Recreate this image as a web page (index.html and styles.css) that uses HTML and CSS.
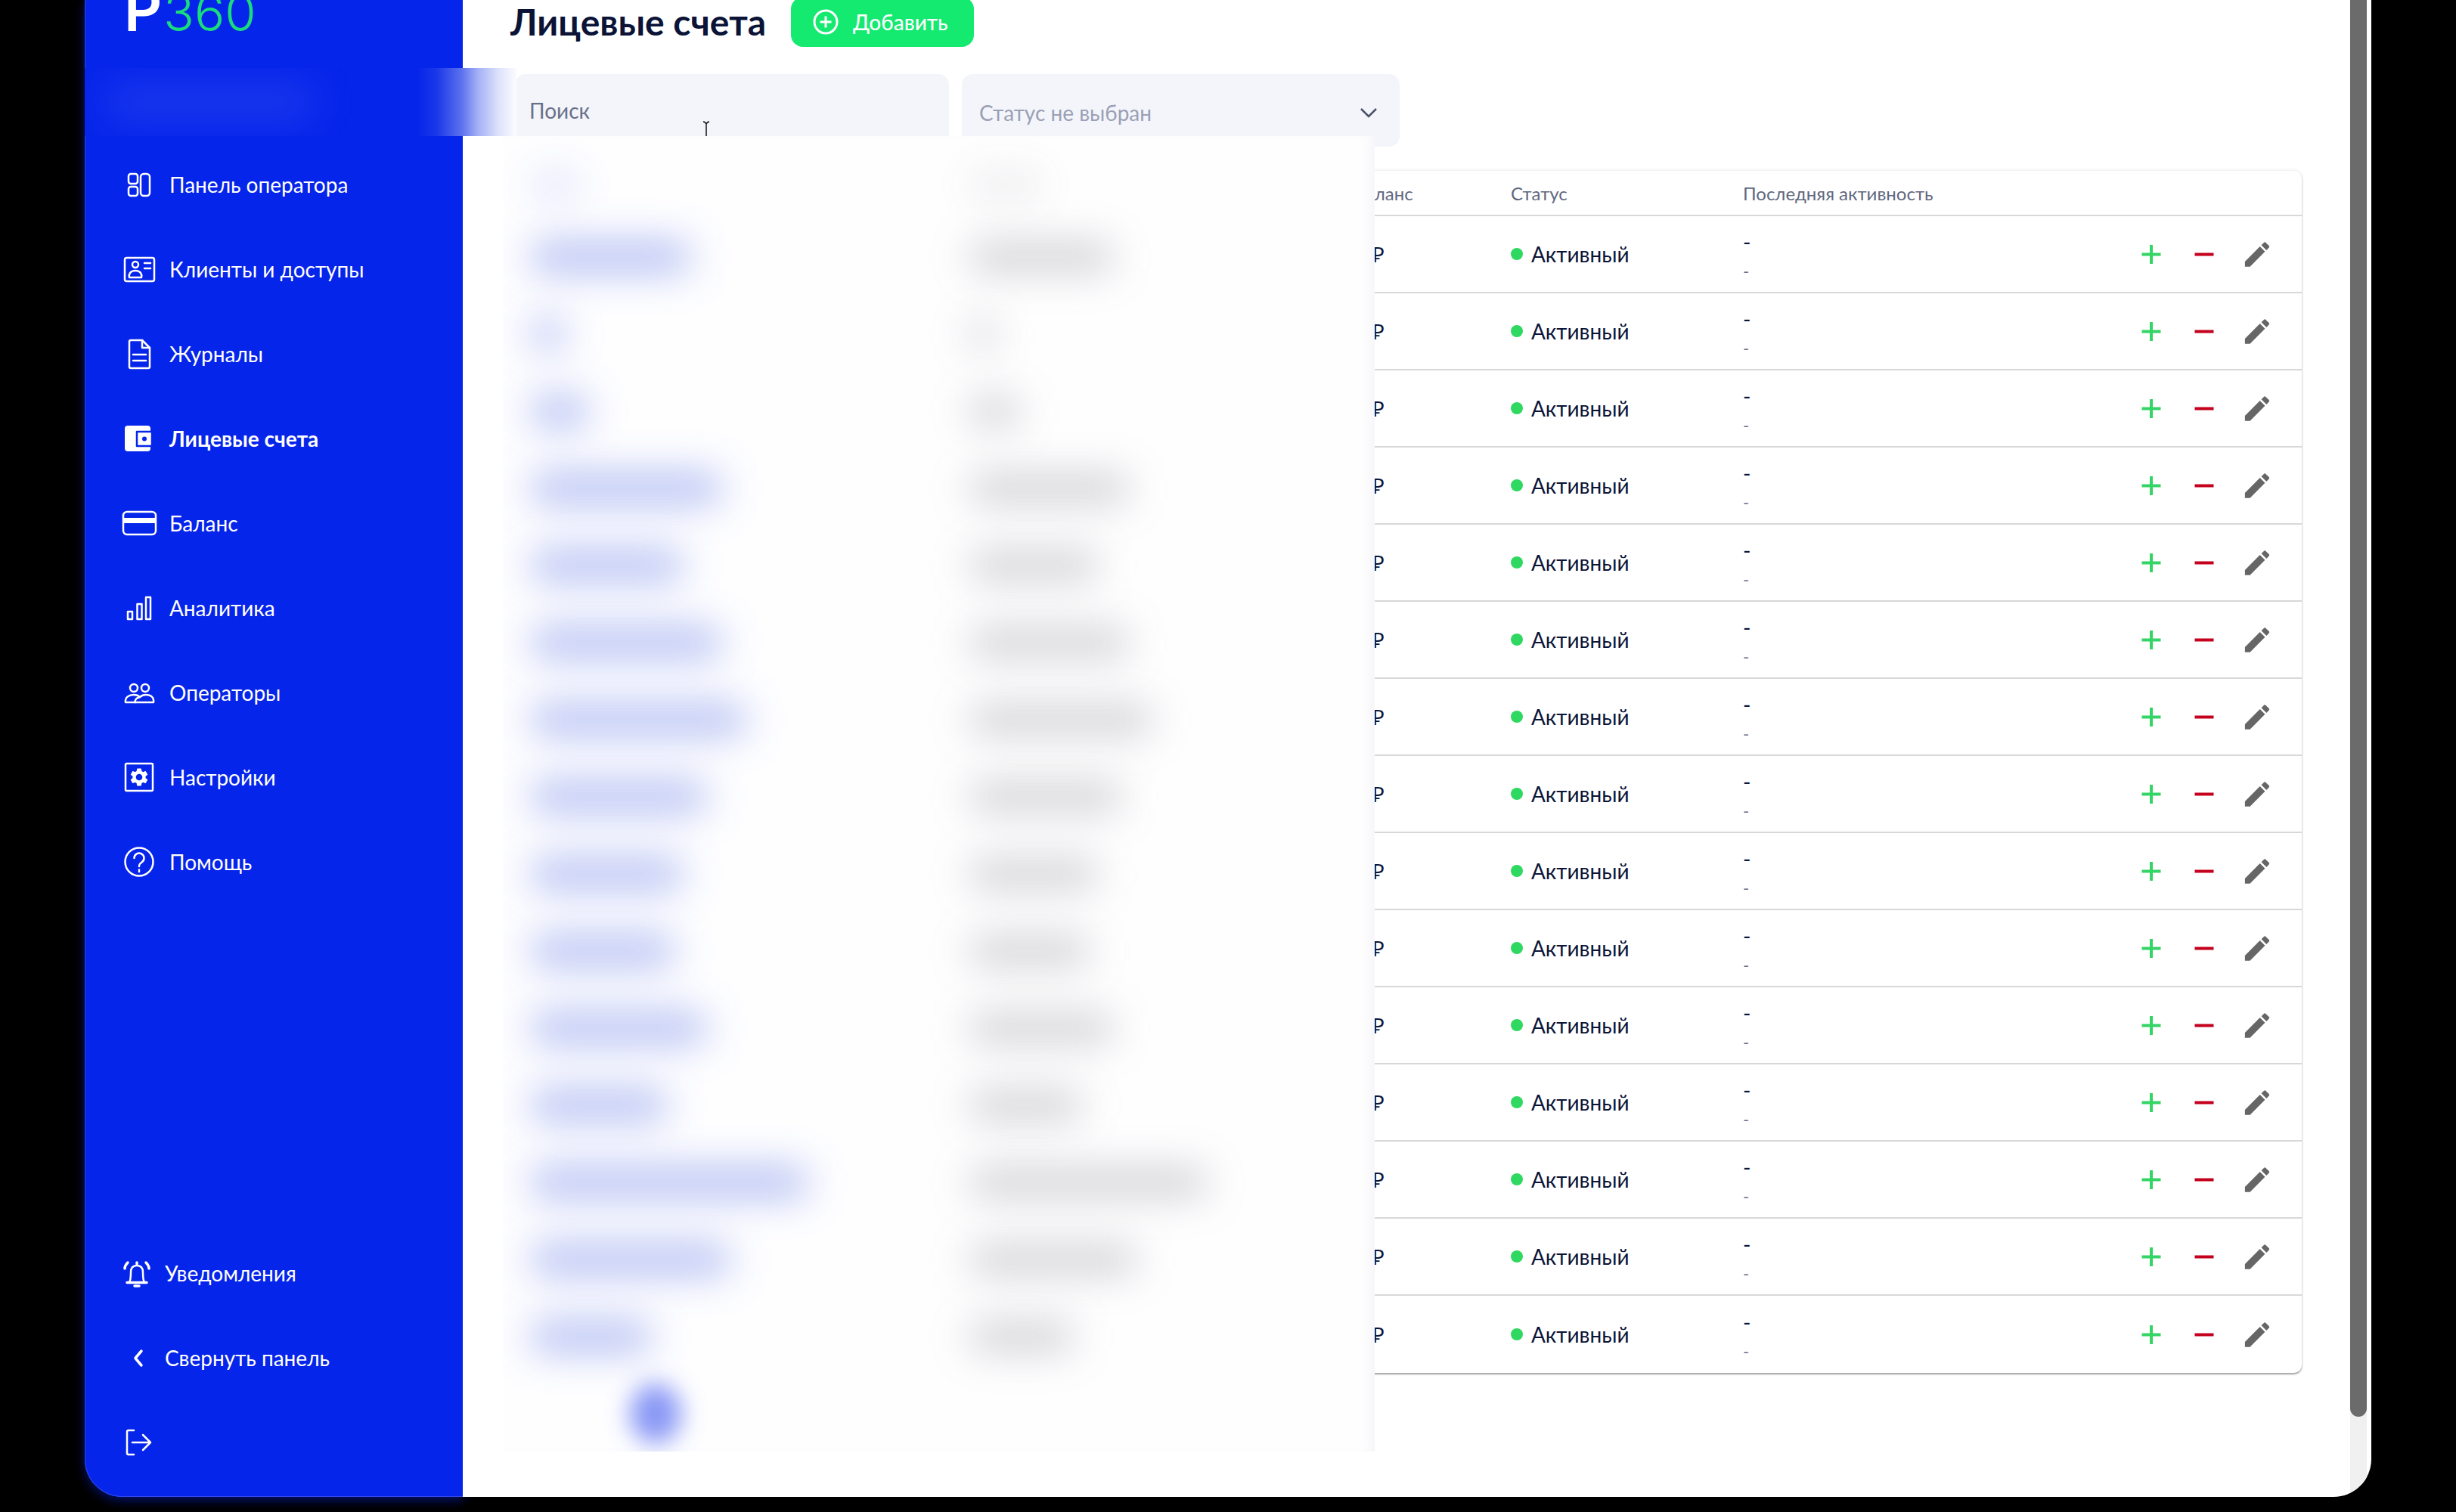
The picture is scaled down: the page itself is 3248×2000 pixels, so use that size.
FILE: index.html
```html
<!DOCTYPE html>
<html lang="ru">
<head>
<meta charset="utf-8">
<title>Лицевые счета</title>
<link rel="stylesheet" href="styles.css">
</head>
<body>
<svg class="sprite" width="0" height="0" aria-hidden="true">
  <symbol id="i-plus" viewBox="0 0 43 43"><path d="M21.500 9v25M9 21.500h25"/></symbol>
  <symbol id="i-minus" viewBox="0 0 43 43"><path d="M9 21.500h25"/></symbol>
  <symbol id="i-edit" viewBox="0 0 24 24"><path d="M3 17.25V21h3.75L17.81 9.94l-3.75-3.75L3 17.25zM20.71 7.04c.39-.39.39-1.02 0-1.41l-2.34-2.34c-.39-.39-1.02-.39-1.41 0l-1.83 1.83 3.75 3.75 1.83-1.83z"/></symbol>
</svg>
<div class="window">
  <aside class="sidebar">
    <div class="logo"><span class="logo-p">P</span><span class="logo-num">360</span></div>
    <nav class="nav">
      <a class="nav-item"><svg class="ico" viewBox="0 0 50 50"><rect x="11" y="11" width="12" height="13" rx="3"/><rect x="11" y="28" width="12" height="12" rx="3"/><rect x="27" y="11" width="12" height="29" rx="4"/></svg><span>Панель оператора</span></a>
      <a class="nav-item"><svg class="ico" viewBox="0 0 50 50"><rect x="6" y="10" width="39" height="31" rx="2.5"/><circle cx="20" cy="19" r="4"/><path d="M12 36c-1-4 1-9 8-9s9 5 8 9z"/><path d="M32 17h8M32 24h8"/></svg><span>Клиенты и доступы</span></a>
      <a class="nav-item"><svg class="ico" viewBox="0 0 50 50"><path d="M14 7h15l10 10v25a2 2 0 0 1-2 2H14a2 2 0 0 1-2-2V9a2 2 0 0 1 2-2z"/><path d="M29 7v10h10M17 26h17M17 34h17"/></svg><span>Журналы</span></a>
      <a class="nav-item active"><svg class="ico" viewBox="0 0 50 50"><rect class="solid" x="6" y="8" width="34" height="34" rx="4"/><rect class="notch" x="22" y="16" width="20" height="19"/><circle class="dot" cx="32" cy="25.500" r="3"/></svg><span>Лицевые счета</span></a>
      <a class="nav-item"><svg class="ico" viewBox="0 0 50 50"><rect x="4" y="10" width="43" height="30" rx="5"/><rect class="solid" x="4" y="18" width="43" height="7"/></svg><span>Баланс</span></a>
      <a class="nav-item"><svg class="ico" viewBox="0 0 50 50"><rect x="10" y="30" width="6" height="10"/><rect x="22.500" y="20" width="6" height="20"/><rect x="34" y="11" width="6" height="29"/></svg><span>Аналитика</span></a>
      <a class="nav-item"><svg class="ico" viewBox="0 0 50 50"><circle cx="18" cy="19" r="5"/><circle cx="33" cy="19" r="5"/><path d="M7 38c-1-7 5-10 11-10 3 0 6 1 8 3 2-2 5-3 8-3 6 0 11 3 10 10z"/><path d="M20 38c-1-3 1-6 6-7"/></svg><span>Операторы</span></a>
      <a class="nav-item"><svg class="ico" viewBox="0 0 50 50"><rect x="7" y="7" width="36" height="36" rx="1.500"/><path class="solid evenodd" transform="translate(10.600 10.600) scale(1.200)" d="M19.140,12.940c.04-.3.06-.61.06-.94 0-.32-.02-.64-.07-.94l2.030-1.580c.18-.14.23-.41.12-.61l-1.920-3.320c-.12-.22-.37-.29-.59-.22l-2.390.96c-.5-.38-1.030-.7-1.620-.94L14.400,2.810c-.04-.24-.24-.41-.48-.41h-3.840c-.24,0-.43.17-.47.41L9.250,5.350c-.59.24-1.130.57-1.620.94L5.240,5.330c-.22-.08-.47,0-.59.22L2.740,8.870c-.12.21-.08.47.12.61l2.030,1.580C4.840,11.360,4.800,11.690,4.800,12s.02.64.07.94l-2.030,1.580c-.18.14-.23.41-.12.61l1.920,3.320c.12.22.37.29.59.22l2.390-.96c.5.38,1.030.7,1.620.94l.36,2.540c.05.24.24.41.48.41h3.840c.24,0,.44-.17.47-.41l.36-2.540c.59-.24,1.130-.56,1.620-.94l2.390.96c.22.08.47,0,.59-.22l1.920-3.320c.12-.22.07-.47-.12-.61L19.140,12.940zM12,15.600c-1.980,0-3.600-1.620-3.600-3.600s1.620-3.600,3.600-3.600,3.600,1.620,3.600,3.600S13.980,15.600,12,15.600z"/></svg><span>Настройки</span></a>
      <a class="nav-item"><svg class="ico" viewBox="0 0 50 50"><circle cx="25" cy="25" r="18.500"/><path d="M18.500 20a6.500 6.500 0 1 1 10 5.500c-2.500 1.600-3.500 2.800-3.500 5.500M25 35.500v2.500"/></svg><span>Помощь</span></a>
    </nav>
    <nav class="nav nav-bottom">
      <a class="nav-item small"><svg class="ico" viewBox="0 0 50 50"><path d="M15 37c2-3 2-6 2-13 0-6 3-9 8-9s8 3 8 9c0 7 0 10 2 13"/><path class="thick" d="M12 37.500h26M22 42h6M25 11v2M13 11c-2 2-4 5-4 8M37 11c2 2 4 5 4 8"/></svg><span>Уведомления</span></a>
      <a class="nav-item small"><svg class="ico" viewBox="0 0 50 50"><path class="thick" d="M31 16l-8 9.500 8 9.500"/></svg><span>Свернуть панель</span></a>
      <a class="nav-item small"><svg class="ico" viewBox="0 0 50 50"><path d="M21 9h-7a2 2 0 0 0-2 2v28a2 2 0 0 0 2 2h7M19 25h24M33 15l10 10-10 10"/></svg></a>
    </nav>
  </aside>

  <main class="main">
    <div class="content">
      <header class="page-head">
        <h1 class="page-title">Лицевые счета</h1>
        <button class="add-btn" type="button"><svg class="add-ico" viewBox="0 0 34 34"><circle cx="17" cy="17" r="15"/><path d="M17 9.500v15M9.500 17h15"/></svg>Добавить</button>
      </header>
      <div class="filters">
        <div class="field field-search">Поиск</div>
        <div class="field field-select"><span>Статус не выбран</span><svg class="chev" viewBox="0 0 24 14"><path d="M2 2l10 10L22 2"/></svg></div>
      </div>
      <section class="card">
        <div class="row head"><span></span><span></span><span>Баланс</span><span>Статус</span><span>Последняя активность</span><span></span></div>
        <div class="row"><span></span><span></span><span class="amt">0 ₽</span><span class="status"><i class="dot-ok"></i>Активный</span><span class="act"><b>-</b><small>-</small></span><span class="actions"><svg class="ic plus"><use href="#i-plus"/></svg><svg class="ic minus"><use href="#i-minus"/></svg><svg class="ic edit"><use href="#i-edit"/></svg></span></div>
        <div class="row"><span></span><span></span><span class="amt">0 ₽</span><span class="status"><i class="dot-ok"></i>Активный</span><span class="act"><b>-</b><small>-</small></span><span class="actions"><svg class="ic plus"><use href="#i-plus"/></svg><svg class="ic minus"><use href="#i-minus"/></svg><svg class="ic edit"><use href="#i-edit"/></svg></span></div>
        <div class="row"><span></span><span></span><span class="amt">0 ₽</span><span class="status"><i class="dot-ok"></i>Активный</span><span class="act"><b>-</b><small>-</small></span><span class="actions"><svg class="ic plus"><use href="#i-plus"/></svg><svg class="ic minus"><use href="#i-minus"/></svg><svg class="ic edit"><use href="#i-edit"/></svg></span></div>
        <div class="row"><span></span><span></span><span class="amt">0 ₽</span><span class="status"><i class="dot-ok"></i>Активный</span><span class="act"><b>-</b><small>-</small></span><span class="actions"><svg class="ic plus"><use href="#i-plus"/></svg><svg class="ic minus"><use href="#i-minus"/></svg><svg class="ic edit"><use href="#i-edit"/></svg></span></div>
        <div class="row"><span></span><span></span><span class="amt">0 ₽</span><span class="status"><i class="dot-ok"></i>Активный</span><span class="act"><b>-</b><small>-</small></span><span class="actions"><svg class="ic plus"><use href="#i-plus"/></svg><svg class="ic minus"><use href="#i-minus"/></svg><svg class="ic edit"><use href="#i-edit"/></svg></span></div>
        <div class="row"><span></span><span></span><span class="amt">0 ₽</span><span class="status"><i class="dot-ok"></i>Активный</span><span class="act"><b>-</b><small>-</small></span><span class="actions"><svg class="ic plus"><use href="#i-plus"/></svg><svg class="ic minus"><use href="#i-minus"/></svg><svg class="ic edit"><use href="#i-edit"/></svg></span></div>
        <div class="row"><span></span><span></span><span class="amt">0 ₽</span><span class="status"><i class="dot-ok"></i>Активный</span><span class="act"><b>-</b><small>-</small></span><span class="actions"><svg class="ic plus"><use href="#i-plus"/></svg><svg class="ic minus"><use href="#i-minus"/></svg><svg class="ic edit"><use href="#i-edit"/></svg></span></div>
        <div class="row"><span></span><span></span><span class="amt">0 ₽</span><span class="status"><i class="dot-ok"></i>Активный</span><span class="act"><b>-</b><small>-</small></span><span class="actions"><svg class="ic plus"><use href="#i-plus"/></svg><svg class="ic minus"><use href="#i-minus"/></svg><svg class="ic edit"><use href="#i-edit"/></svg></span></div>
        <div class="row"><span></span><span></span><span class="amt">0 ₽</span><span class="status"><i class="dot-ok"></i>Активный</span><span class="act"><b>-</b><small>-</small></span><span class="actions"><svg class="ic plus"><use href="#i-plus"/></svg><svg class="ic minus"><use href="#i-minus"/></svg><svg class="ic edit"><use href="#i-edit"/></svg></span></div>
        <div class="row"><span></span><span></span><span class="amt">0 ₽</span><span class="status"><i class="dot-ok"></i>Активный</span><span class="act"><b>-</b><small>-</small></span><span class="actions"><svg class="ic plus"><use href="#i-plus"/></svg><svg class="ic minus"><use href="#i-minus"/></svg><svg class="ic edit"><use href="#i-edit"/></svg></span></div>
        <div class="row"><span></span><span></span><span class="amt">0 ₽</span><span class="status"><i class="dot-ok"></i>Активный</span><span class="act"><b>-</b><small>-</small></span><span class="actions"><svg class="ic plus"><use href="#i-plus"/></svg><svg class="ic minus"><use href="#i-minus"/></svg><svg class="ic edit"><use href="#i-edit"/></svg></span></div>
        <div class="row"><span></span><span></span><span class="amt">0 ₽</span><span class="status"><i class="dot-ok"></i>Активный</span><span class="act"><b>-</b><small>-</small></span><span class="actions"><svg class="ic plus"><use href="#i-plus"/></svg><svg class="ic minus"><use href="#i-minus"/></svg><svg class="ic edit"><use href="#i-edit"/></svg></span></div>
        <div class="row"><span></span><span></span><span class="amt">0 ₽</span><span class="status"><i class="dot-ok"></i>Активный</span><span class="act"><b>-</b><small>-</small></span><span class="actions"><svg class="ic plus"><use href="#i-plus"/></svg><svg class="ic minus"><use href="#i-minus"/></svg><svg class="ic edit"><use href="#i-edit"/></svg></span></div>
        <div class="row"><span></span><span></span><span class="amt">0 ₽</span><span class="status"><i class="dot-ok"></i>Активный</span><span class="act"><b>-</b><small>-</small></span><span class="actions"><svg class="ic plus"><use href="#i-plus"/></svg><svg class="ic minus"><use href="#i-minus"/></svg><svg class="ic edit"><use href="#i-edit"/></svg></span></div>
        <div class="row last"><span></span><span></span><span class="amt">0 ₽</span><span class="status"><i class="dot-ok"></i>Активный</span><span class="act"><b>-</b><small>-</small></span><span class="actions"><svg class="ic plus"><use href="#i-plus"/></svg><svg class="ic minus"><use href="#i-minus"/></svg><svg class="ic edit"><use href="#i-edit"/></svg></span></div>
      </section>
    </div>
    <div class="scrollbar"><div class="scroll-thumb"></div></div>

    <svg class="cursor" viewBox="0 0 12 20"><path d="M2 1c2 0 3 1 4 3 1-2 2-3 4-3M6 4v16"/></svg>
    <div class="veil">
      <div class="blob-row faint"><i class="blue" style="width:62px"></i><i class="gray" style="width:93px"></i></div>
      <div class="blob-row"><i class="blue" style="width:207px"></i><i class="gray" style="width:186px"></i></div>
      <div class="blob-row"><i class="blue" style="width:41px"></i><i class="gray" style="width:31px"></i></div>
      <div class="blob-row"><i class="blue" style="width:72px"></i><i class="gray" style="width:62px"></i></div>
      <div class="blob-row"><i class="blue" style="width:248px"></i><i class="gray" style="width:207px"></i></div>
      <div class="blob-row"><i class="blue" style="width:197px"></i><i class="gray" style="width:166px"></i></div>
      <div class="blob-row"><i class="blue" style="width:248px"></i><i class="gray" style="width:207px"></i></div>
      <div class="blob-row"><i class="blue" style="width:280px"></i><i class="gray" style="width:238px"></i></div>
      <div class="blob-row"><i class="blue" style="width:228px"></i><i class="gray" style="width:197px"></i></div>
      <div class="blob-row"><i class="blue" style="width:197px"></i><i class="gray" style="width:166px"></i></div>
      <div class="blob-row"><i class="blue" style="width:186px"></i><i class="gray" style="width:155px"></i></div>
      <div class="blob-row"><i class="blue" style="width:228px"></i><i class="gray" style="width:186px"></i></div>
      <div class="blob-row"><i class="blue" style="width:176px"></i><i class="gray" style="width:145px"></i></div>
      <div class="blob-row"><i class="blue" style="width:362px"></i><i class="gray" style="width:310px"></i></div>
      <div class="blob-row"><i class="blue" style="width:259px"></i><i class="gray" style="width:217px"></i></div>
      <div class="blob-row"><i class="blue" style="width:155px"></i><i class="gray" style="width:134px"></i></div>
      <div class="page-blob"></div>
    </div>
  </main>
  <div class="smear"><div class="smear-glow"></div></div>
</div>
</body>
</html>
```

FILE: styles.css
```css
* { box-sizing: border-box; }
html, body { margin: 0; height: 100%; background: #000; overflow: hidden; }
body { font-family: "Lato", "Noto Sans", sans-serif; color: #0c1538; }
.sprite { position: absolute; }

.window { position: relative; display: flex; width: 3024px; height: 1980px; margin-left: 112px; }

/* Sidebar */
.sidebar {
  display: flex; flex-direction: column; flex: 0 0 500px; height: 100%;
  padding-bottom: 16px; background: #0625ea; color: #fff;
  border-bottom-left-radius: 50px; box-shadow: 0 5px 14px rgba(6, 37, 234, .45), inset 1px 0 0 #3049ec, inset 0 -1px 0 #3049ec;
}
.logo { display: flex; align-items: baseline; height: 210px; margin-top: -22px; padding-left: 52px; line-height: 70px; white-space: nowrap; }
.logo-p { font-family: "Inter", sans-serif; font-size: 78px; font-weight: 600; color: #fff; }
.logo-num { margin-left: 2px; font-family: "Inter", sans-serif; font-size: 67px; font-weight: 300; color: #19dd7c; }

.nav { display: flex; flex-direction: column; }
.nav-bottom { margin-top: auto; }
.nav-item { display: flex; align-items: center; gap: 15px; height: 112px; padding-left: 47px; font-size: 28px; white-space: nowrap; }
.nav-item.small { gap: 12px; padding-left: 44px; }
.nav-item.active { font-weight: 700; }
.ico { flex: 0 0 50px; width: 50px; height: 50px; fill: none; stroke: #fff; stroke-width: 2.5; stroke-linecap: round; stroke-linejoin: round; }
.ico .solid { fill: #fff; stroke: none; }
.ico .evenodd { fill-rule: evenodd; }
.ico .notch { fill: #fff; stroke: #0625ea; stroke-width: 2.5; }
.ico .dot { fill: #0625ea; stroke: none; }
.ico .thick { stroke-width: 3.5; }

/* Main */
.main { position: relative; z-index: 1; display: flex; flex: 1; min-width: 0; height: 100%; background: #fff; border-bottom-right-radius: 50px; overflow: hidden; }
.content { flex: 1; min-width: 0; }
.page-head { display: flex; align-items: center; gap: 33px; height: 66px; margin-top: -4px; padding-left: 63px; }
.page-title { width: 338px; margin: 0; font-size: 48px; font-weight: 700; line-height: 1; color: #0b1437; white-space: nowrap; }
.add-btn { display: flex; align-items: center; gap: 19px; flex: none; width: 242px; height: 66px; padding: 0 0 0 29px; border: 0; border-radius: 16px; background: #14e970; color: #fff; font-family: "Lato", sans-serif; font-size: 28px; font-weight: 500; }
.add-ico { width: 34px; height: 34px; fill: none; stroke: #fff; stroke-width: 3; }

.filters { display: flex; gap: 17px; margin-top: 36px; padding-left: 69px; }
.field { height: 96px; border-radius: 14px; background: #f3f5fb; font-size: 28px; }
.field-search { width: 574px; padding: 31px 0 0 19px; line-height: 34px; color: #6a7088; }
.field-select { display: flex; align-items: center; justify-content: space-between; width: 579px; padding: 6px 29px 0 23px; color: #9aa0b5; }
.chev { width: 24px; height: 14px; fill: none; stroke: #4a5068; stroke-width: 2.500; }

.card { margin: 32px 64px 0 69px; border-radius: 10px; background: #fff; box-shadow: 0 0 4px rgba(0, 0, 0, .12), 0 2px 2px rgba(0, 0, 0, .32); }
.row { display: grid; grid-template-columns: 580px 507px 207px 307px 1fr 210px; align-items: center; height: 102px; padding: 0 24px 0 23px; border-bottom: 2px solid #d8d8d8; font-size: 28px; }
.row.head { height: 60px; font-size: 24px; color: #5f6880; }
.row.last { border-bottom: 0; }
.status { display: flex; align-items: center; gap: 11px; }
.dot-ok { width: 16px; height: 16px; border-radius: 50%; background: #2fd861; }
.act { display: flex; flex-direction: column; padding-top: 4px; line-height: 1; }
.act b { height: 42px; font-size: 28px; font-weight: 400; }
.act small { font-size: 22px; color: #6b7388; }
.actions { display: flex; }
.ic { display: block; flex: 0 0 70px; height: 43px; }
.plus { fill: none; stroke: #35d466; stroke-width: 4; }
.minus { fill: none; stroke: #c4001d; stroke-width: 4; }
.edit { fill: #666; }

.scrollbar { flex: 0 0 22px; margin-right: 6px; background: #f0f0f0; }
.scroll-thumb { height: 1874px; background: #6b6b6b; border-radius: 0 0 11px 11px; }

/* Overlays */
.cursor { position: absolute; left: 316px; top: 160px; width: 12px; height: 20px; fill: none; stroke: #111; stroke-width: 1.500; }
.veil { position: absolute; left: 53px; top: 180px; width: 1153px; height: 1740px; padding-top: 35px; overflow: hidden; background: #fefeff; box-shadow: inset -14px 0 20px -14px rgba(120, 125, 150, .12); }
.blob-row { position: relative; display: flex; align-items: center; height: 102px; padding-left: 39px; }
.blob-row:first-child { height: 59px; margin-bottom: 15px; }
.blob-row i { display: block; flex: none; height: 40px; filter: blur(26px); border-radius: 6px; }
.blob-row .blue { background: rgba(40, 70, 220, .36); }
.blob-row .gray { position: absolute; left: 619px; background: rgba(90, 90, 100, .27); }
.blob-row.faint i { opacity: .35; }
.page-blob { position: absolute; left: 168px; top: 1650px; width: 68px; height: 80px; border-radius: 50%; background: rgba(20, 50, 235, .5); filter: blur(16px); }

.smear { position: absolute; z-index: 2; left: 0; top: 90px; width: 571px; height: 90px; overflow: hidden;
  background: linear-gradient(90deg, #0625ea 0, #0625ea 440px, #1a37e8 465px, #5a70ee 498px, #a3b0f5 520px, #dfe3fb 548px, #fbfcff 571px); }
.smear-glow { position: absolute; left: 30px; top: 24px; width: 270px; height: 42px; background: rgba(120, 140, 255, .22); filter: blur(26px); }
```
